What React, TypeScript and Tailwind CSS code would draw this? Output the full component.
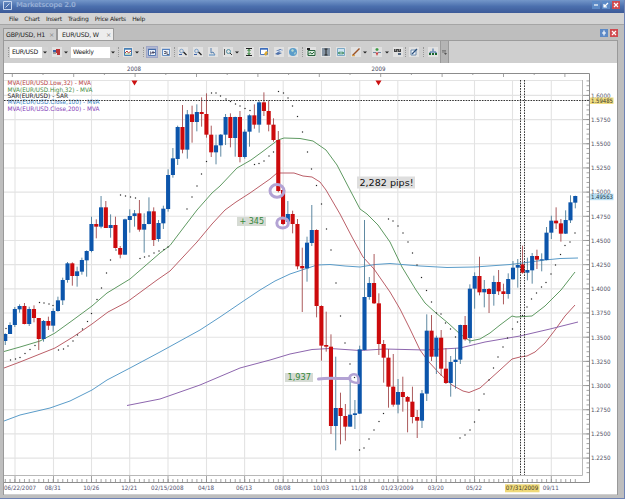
import type { ReactNode } from "react"
import clsx from "clsx"

type Row = [number, number, number, number, number] // up, high, top, bottom, low

const STEP = 4.79
const FIRST = 5.3

// rows are in thirds of a pixel, counted down from y
const blocks: { y: number; rows: Row[] }[] = [
  {
    y: 190,
    rows: [
      [1, 430, 432, 453, 465], [1, 397, 405, 432, 432], [1, 351, 357, 405, 411], [1, 343, 348, 358, 368],
      [0, 339, 348, 402, 403], [1, 350, 357, 402, 408], [0, 346, 357, 384, 397], [0, 384, 384, 447, 480],
      [1, 390, 393, 447, 455], [0, 380, 393, 407, 420], [1, 355, 363, 407, 425], [1, 320, 331, 363, 365],
      [1, 263, 270, 331, 345], [1, 216, 220, 270, 278], [0, 217, 220, 258, 287], [1, 230, 244, 258, 290],
      [1, 203, 210, 245, 254], [1, 181, 183, 211, 260], [1, 80, 102, 183, 187], [0, 88, 102, 110, 145],
      [1, 18, 52, 110, 115], [0, 33, 52, 114, 114], [1, 73, 105, 114, 143], [0, 80, 105, 174, 176],
      [0, 168, 174, 194, 205], [1, 86, 88, 194, 194], [1, 58, 78, 90, 128], [1, 60, 70, 78, 110],
      [0, 30, 70, 119, 125], [1, 70, 102, 119, 188], [1, 22, 64, 102, 103], [0, 52, 64, 150, 168],
      [1, 90, 99, 147, 155], [1, 47, 56, 100, 117],
    ],
  },
  {
    y: 60,
    rows: [
      [1, 328, 345, 447, 455], [1, 264, 295, 345, 353], [1, 197, 201, 297, 315], [0, 135, 201, 269, 280],
      [1, 150, 163, 269, 296], [0, 137, 163, 186, 248], [1, 133, 156, 186, 214], [0, 112, 156, 162, 200],
      [0, 100, 162, 224, 233], [0, 197, 224, 277, 291], [1, 224, 256, 277, 313], [1, 222, 224, 256, 290],
      [1, 162, 171, 224, 255], [0, 160, 171, 234, 262], [1, 170, 171, 234, 290], [0, 153, 171, 291, 307],
      [1, 208, 215, 291, 296], [1, 163, 166, 215, 260], [0, 133, 166, 194, 206], [1, 123, 127, 194, 218],
      [0, 97, 127, 153, 168], [0, 122, 153, 194, 214], [0, 175, 194, 240, 245], [0, 213, 240, 393, 397],
    ],
  },
  {
    y: 150,
    rows: [
      [0, 115, 120, 222, 225], [1, 153, 192, 215, 225], [0, 182, 192, 222, 250], [0, 207, 222, 349, 358],
      [0, 293, 348, 355, 486], [1, 260, 278, 355, 395], [1, 165, 240, 279, 288], [0, 238, 240, 468, 502],
    ],
  },
  {
    y: 310,
    rows: [
      [0, -14, -12, 107, 152], [0, 5, 105, 110, 125], [0, 73, 110, 348, 372], [1, 140, 294, 348, 421],
      [0, 248, 294, 318, 403], [0, 282, 318, 350, 392], [1, 210, 314, 350, 350], [1, 270, 310, 315, 357],
      [1, 107, 118, 311, 312], [1, -270, -39, 120, 121], [1, -99, -81, -39, -31], [0, -168, -81, -20, -18],
      [0, -50, -20, 102, 135], [0, 90, 102, 143, 218], [0, 117, 143, 230, 293], [0, 132, 230, 284, 290],
      [1, 207, 246, 284, 310], [0, 200, 246, 261, 305], [0, 258, 261, 275, 367], [0, 230, 275, 321, 340],
      [0, 300, 321, 332, 384], [1, 240, 250, 332, 354],
    ],
  },
  {
    y: 290,
    rows: [
      [1, 73, 122, 311, 333], [0, 75, 122, 200, 213], [1, 137, 143, 200, 252], [0, 120, 143, 236, 258],
      [0, 174, 236, 279, 282], [1, 198, 216, 279, 320], [1, 174, 209, 216, 296], [1, 104, 105, 209, 222],
      [0, 78, 105, 148, 152], [1, -17, -4, 144, 160],
    ],
  },
  {
    y: 170,
    rows: [
      [1, 307, 318, 356, 416], [0, 260, 318, 367, 376], [1, 330, 357, 367, 412], [0, 354, 357, 372, 429],
      [1, 317, 336, 372, 407], [0, 300, 336, 364, 375], [0, 341, 364, 372, 403], [1, 310, 327, 372, 386],
      [1, 273, 293, 328, 329], [1, 267, 285, 293, 353], [0, 227, 283, 308, 311], [1, 263, 300, 308, 331],
      [1, 249, 258, 301, 341], [0, 239, 258, 269, 297], [1, 250, 268, 270, 304], [1, 171, 188, 270, 271],
      [1, 137, 152, 188, 207], [0, 112, 152, 160, 177], [0, 147, 160, 191, 215], [1, 121, 150, 191, 192],
      [1, 76, 97, 151, 159], [1, 77, 78, 98, 115],
    ],
  },
]

const candles = blocks
  .flatMap((b) => b.rows.map(([up, ...v]) => ({ up: up === 1, v: v.map((n) => b.y + n / 3) })))
  .map((c, i) => ({ ...c, x: FIRST + STEP * i }))

const sar = [
  6, 328.5, 39.5, 302.5, 44, 303, 49, 304, 53, 305.5, 10.5, 360, 15.5, 359, 20, 357.5, 25, 353.5, 30, 349.5, 35, 345.5,
  58.5, 350, 63.5, 349, 68, 346, 73, 341, 77.5, 335, 82.5, 329, 87.5, 321.5, 91.5, 313.5, 97, 299.5, 101.5, 288,
  106.5, 273, 110.5, 260, 116, 250, 120.5, 195, 125.5, 196, 130.5, 197, 135.5, 198, 140, 258.5, 144.5, 257, 149, 256,
  154, 253, 159, 251, 164, 249.5, 168, 247, 187, 209, 192, 197, 197, 186, 201.5, 174, 206.5, 161.5, 211.5, 93, 216, 93,
  220.5, 96, 226, 99, 230.5, 101.5, 235.5, 104, 240, 106, 245, 108.5, 250, 110.5, 254.5, 164.5, 259, 163.5, 264, 161,
  269, 156, 273.5, 152, 278.5, 91.5, 283.5, 93, 288, 98, 292.5, 106, 297.5, 116.5, 302.5, 132, 307.5, 152, 311.5, 169,
  316.5, 185.5, 321.5, 204, 326.5, 229, 331, 250, 336, 283, 340.5, 316, 345, 343, 350, 364, 354.5, 377.5, 359.5, 450,
  364, 448, 369, 439, 374, 430, 379, 421.5, 383.5, 413.5, 388.5, 219, 393, 221, 398, 226, 403, 233, 408, 242,
  412.5, 253, 417, 265, 421.5, 277.5, 426.5, 290.5, 431.5, 302, 436.5, 313, 441, 314, 445.5, 323, 450.5, 329,
  455.5, 337, 460, 438, 465, 435, 470, 430, 474.5, 422, 479, 410, 484, 394, 489, 380, 493.5, 368, 498, 357, 503, 347,
  507.5, 338, 512.5, 329, 517.5, 322, 522.5, 315.5, 527, 307, 531.5, 299, 536.5, 293, 541.5, 287, 546, 282.5, 551, 274,
  555.5, 265, 560.5, 254.5, 565, 245.5, 570, 242, 575, 233,
]

const averages = [
  {
    color: "#5f9a62",
    points:
      "4,351.5 20,347 40,341 55,333 73,320 92,306 107,293 130,279 145,266 160,253 170,245.5 184,227 197,210 212,193 220,186 237,168 251,160 262,152 278,140 284,138 300,138.5 313,141 326,150 337,165 350,190 360,209 367,214 378,225 390,242 402,267 416,290 425,303 436,313 448,323 460,334 470,341 480,339 490,333 500,325 512,316 516,317 532,316 545,306 555,296 561,290 575,272",
  },
  {
    color: "#bb5f68",
    points:
      "4,368 20,362 40,354 55,348 73,337 92,324 108,312 127,302 157,280 170,271 197,242 212,224 225,210 236,202 250,193 270,179 277,173 294,173 303,176 312,177 320,182 326,190 340,214 352,237 363,257 374,269 390,292 400,309 410,329 420,350 428,361 440,374 452,385 463,391 469,392.5 480,388 490,379 500,370 512,359 520,357 527,356 535,352 545,343 555,330 565,316 575,305",
  },
  {
    color: "#5a9cc9",
    points:
      "4,421 20,415 50,408 70,401 92,390 107,380 130,368 160,352 200,330 220,317 245,300 260,290 275,281 290,274 305,269 317,265 330,264.5 345,266 360,267 375,264.5 390,263.5 420,266 447,267.5 475,267 510,264.5 530,262 545,260 560,258.5 578,258",
  },
  {
    color: "#8d66ae",
    points:
      "127,405.5 160,399 200,385 240,368 270,360 290,354 312,349.5 330,348.5 360,350.5 385,349 425,350 460,348 485,342 520,336 550,329 578,322",
  },
]

const legend = [
  { text: "MVA(EUR/USD.Low,32) - MVA", color: "#b5423f", w: 83.5 },
  { text: "MVA(EUR/USD.High,32) - MVA", color: "#3f8b40", w: 85 },
  { text: "SAR(EUR/USD) - SAR", color: "#222222", w: 60.5 },
  { text: "MVA(EUR/USD.Close,100) - MVA", color: "#3a83c4", w: 92 },
  { text: "MVA(EUR/USD.Close,200) - MVA", color: "#8440b8", w: 92 },
]

const dates = [
  { text: "06/22/2007", x: 20, w: 32 },
  { text: "08/31", x: 52.8, w: 16 },
  { text: "10/26", x: 91.3, w: 16 },
  { text: "12/21", x: 129.3, w: 16 },
  { text: "02/15/2008", x: 167.3, w: 32.5 },
  { text: "04/18", x: 206, w: 16 },
  { text: "06/13", x: 244, w: 16 },
  { text: "08/08", x: 282.6, w: 16 },
  { text: "10/03", x: 321, w: 16 },
  { text: "11/28", x: 359, w: 16 },
  { text: "01/23/2009", x: 397.3, w: 32.5 },
  { text: "03/20", x: 435.8, w: 16 },
  { text: "05/22", x: 474, w: 16 },
  { text: "09/11", x: 550.7, w: 16 },
]

const gridX = [15, 53.5, 91.5, 129.7, 168, 206.5, 244.6, 283.2, 321.5, 359.7, 397.8, 436.4, 474.5, 512.5, 551.3]
const prices = Array.from({ length: 16 }, (_, i) => ({ y: 95.4 + i * 24.18, label: (1.6 - i * 0.025).toFixed(4) }))
const months = Array.from({ length: 19 }, (_, i) => 12.3 + i * 30.7)

function Label({ x, y, w, fill, children, size = 6, anchor = "start" }: {
  x: number
  y: number
  w: number
  fill: string
  children: string
  size?: number
  anchor?: "start" | "middle"
}) {
  return (
    <text x={x} y={y} fontSize={size} fill={fill} textAnchor={anchor} textLength={w} lengthAdjust="spacingAndGlyphs">
      {children}
    </text>
  )
}

function Chart() {
  return (
    <svg viewBox="4 63 613 431" className="block h-[431px] w-[613px] bg-white">
      <g stroke="#e3e3e3" strokeWidth="1.1">
        {gridX.map((x) => <line key={x} x1={x} x2={x} y1="80" y2="475" />)}
        {prices.map((p) => <line key={p.y} x1="4" x2="582" y1={p.y} y2={p.y} />)}
        <path d="M4 80.5H582.5" />
      </g>
      <path d="M582.5 80V475.5H4" fill="none" stroke="#b8b8b8" />
      <path d="M4 73.5H589.5V482.5H4" fill="none" stroke="#8c8c8c" />

      <g stroke="#8c8c8c" strokeWidth="0.8">
        {months.map((x, i) => <line key={x} x1={x} x2={x} y1="73.5" y2={i % 2 ? 75 : 77} />)}
        {candles.map((c) => <line key={c.x} x1={c.x} x2={c.x} y1="479" y2="482.5" />)}
        {gridX.map((x) => <line key={x} x1={x} x2={x} y1="476" y2="482.5" />)}
        {prices.map((p) => <line key={p.y} x1="583" x2="589.5" y1={p.y} y2={p.y} />)}
        {Array.from({ length: 82 }, (_, i) => 80.9 + i * 4.836).map((y) => (
          <line key={y} x1="586.5" x2="589.5" y1={y} y2={y} />
        ))}
      </g>

      {legend.map((l, i) => (
        <Label key={l.text} x={7.5} y={85.2 + i * 6.35} w={l.w} fill={l.color} size={6.1}>{l.text}</Label>
      ))}

      {averages.map((a) => (
        <polyline key={a.color} points={a.points} fill="none" stroke={a.color} strokeWidth="1" strokeLinejoin="round" />
      ))}

      {candles.map(({ x, up, v: [high, top, bottom, low] }) => (
        <g key={x}>
          <rect x={x - 0.5} y={high} width="0.9" height={low - high} fill={up ? "#4d7c98" : "#a34a4c"} />
          <rect x={x - 2.1} y={top} width="4.1" height={Math.max(bottom - top, 1)} fill={up ? "#0c55ab" : "#cc0a0c"} />
        </g>
      ))}

      {sar.map((x, i) => i % 2 === 0 && (
        <rect key={i} x={x - 0.6} y={sar[i + 1] - 0.6} width="1.2" height="1.2" fill="#222222" />
      ))}

      <path d="M4 100.5H589" stroke="#333333" strokeDasharray="1.6 1.1" />
      <path d="M520.5 80V475M524.5 80V475" stroke="#333333" strokeDasharray="1.6 1.1" />
      <path d="M131.5 80.5h6l-3 5zM375.5 80.5h6l-3 5z" fill="#cc1111" />

      <g fill="none" stroke="#b3a3d4" strokeWidth="3" strokeLinecap="round">
        <ellipse cx="277" cy="190.8" rx="7" ry="6.4" />
        <ellipse cx="282.6" cy="223" rx="5.8" ry="5" />
        <path d="M318.5 379C330 377.5 340 379 350 378.5" />
        <path d="M352.5 374.5C357 373.5 359.5 377 358.5 383C353 383 349.5 381 349.5 378.5C349.5 376 351 374.8 352.5 374.5Z" strokeWidth="2.5" />
      </g>

      <rect x="357" y="176.5" width="58" height="12" fill="#dedede" />
      <Label x={359.5} y={186} w={54} fill="#111111" size={9.5}>2,282 pips!</Label>
      <rect x="237" y="217" width="29" height="9" fill="#d6dbd4" />
      <Label x={239.5} y={224.2} w={24.5} fill="#35883a" size={8}>+ 345</Label>
      <rect x="285" y="373" width="28" height="9" fill="#d6dbd4" />
      <Label x={287.5} y={380.4} w={23.5} fill="#35883a" size={8}>1,937</Label>

      <Label x={134} y={70.6} w={14} fill="#44445c" anchor="middle">2008</Label>
      <Label x={378.5} y={70.6} w={14} fill="#44445c" anchor="middle">2009</Label>
      {prices.map((p) => (
        <Label key={p.label} x={591} y={p.y + 2.3} w={19.5} fill="#50505f">{p.label}</Label>
      ))}
      <rect x="590" y="97.5" width="23.5" height="6.5" fill="#efdd83" />
      <Label x={591} y={103} w={22} fill="#3c3a2c">1.59485</Label>
      <rect x="590" y="193.7" width="23.5" height="6.5" fill="#b9dff2" />
      <Label x={591} y={199.3} w={22} fill="#263b4d">1.49563</Label>

      {dates.map((d) => (
        <Label key={d.text} x={d.x} y={490.3} w={d.w} fill="#505070" anchor="middle">{d.text}</Label>
      ))}
      <rect x="505" y="484.3" width="34.5" height="8" fill="#efd978" />
      <Label x={522} y={490.3} w={32.5} fill="#3f3b2c" anchor="middle">07/31/2009</Label>
    </svg>
  )
}

function Icon({ children, className, active }: { children: ReactNode; className?: string; active?: boolean }) {
  return (
    <span className={clsx("block h-[10px] w-[10px] shrink-0", active ? "bg-[#b2b9d4] outline outline-[#a0a7c6]" : "bg-[#e1e1e1]", className)}>
      <svg viewBox="0 0 10 10" className="h-[10px] w-[10px]" fill="none">{children}</svg>
    </span>
  )
}

function Arrow({ className }: { className?: string }) {
  return (
    <svg viewBox="0 0 4 3" className={clsx("h-[3px] w-[4px] shrink-0", className)}>
      <path d="M0 .5h4l-2 2z" fill="#222222" />
    </svg>
  )
}

function Grip({ className }: { className?: string }) {
  return <span className={clsx("h-[10px] w-px shrink-0 border-l border-dotted border-[#999999]", className)} />
}

function Combo({ children, className }: { children: string; className: string }) {
  return (
    <span className={clsx("flex h-[11px] shrink-0 items-center justify-between bg-white pl-[2px] text-[6.2px] tracking-[-0.3px] text-[#222222]", className)}>
      {children}
      <span className="flex h-full w-[6px] items-center justify-center bg-[#d2d2d2]"><Arrow /></span>
    </span>
  )
}

function Toolbar() {
  const lens = <><circle cx="3.5" cy="4" r="1.8" stroke="#7ba1cc" /><path d="M5.5 5l3 3" stroke="#222222" strokeWidth="1.3" /></>
  return (
    <div className="flex h-[23px] items-center border-t border-[#9c9c9c] bg-[#cfcfcf]">
      <Grip className="ml-[4px]" />
      <Combo className="ml-[1px] w-[38px]">EUR/USD</Combo>
      <Icon className="ml-[4px]">
        <path d="M1 3h4v2H1z" fill="#3b62a8" /><path d="M4 2h4v4H4zM5 6h3v2H5z" fill="#ba3436" /><path d="M1 6h3" stroke="#555555" />
      </Icon>
      <Arrow className="ml-[2px]" />
      <Combo className="ml-[3px] w-[45px]">Weekly</Combo>
      <Grip className="ml-[2px]" />
      <Icon className="ml-[4px]">
        <path d="M1.5 1.5h7v7h-7z" fill="#ffffff" stroke="#477fb5" /><path d="M1 2h8" stroke="#477fb5" strokeWidth="1.5" /><path d="M2 6l2-2 1.5 2L8 4" stroke="#b53b34" /><path d="M2 7h6" stroke="#4a9550" strokeWidth=".7" />
      </Icon>
      <Arrow className="ml-[2px]" />
      <Grip className="ml-[4px]" />
      <Icon className="ml-[3px]" active>
        <path d="M1.5 2.5h7v6h-7z" fill="#edf3fa" stroke="#547ab4" /><path d="M1 2.3h8" stroke="#3d67a8" /><path d="M3 5h1v2H3M6 4v3M5 5.5h3" stroke="#333355" strokeWidth=".8" />
      </Icon>
      <Icon className="ml-[4px]">
        <path d="M1.5 2.5h7v6h-7z" fill="#edf3fa" stroke="#6992c5" /><path d="M1 2.3h8" stroke="#4f7fc0" /><path d="M3 4.5h2v2H3M6 4.5v3h2" stroke="#444455" strokeWidth=".8" />
      </Icon>
      <Grip className="ml-[3px]" />
      <Icon className="ml-[3px]">{lens}<path d="M1 7.5h3" stroke="#3b62a8" /></Icon>
      <Icon className="ml-[5px]">{lens}<path d="M1 7.5h3" stroke="#3b62a8" /></Icon>
      <Icon className="ml-[5px]"><path d="M3 1v5l2-1 2 3" stroke="#567fae" /><path d="M1 8h6" stroke="#74a0ca" strokeWidth="1.3" /></Icon>
      <Icon className="ml-[5px]">
        <path d="M1.5 2v6" stroke="#333333" strokeWidth=".8" /><circle cx="5.5" cy="4.5" r="2" stroke="#5493a6" /><path d="M7 6l2 2" stroke="#333333" />
      </Icon>
      <Arrow className="ml-[2px]" />
      <Icon className="ml-[5px]"><path d="M2 1.5h6M2 8.5h6" stroke="#222222" /><path d="M5 2v6M3.5 4L5 2.5 6.5 4M3.5 6L5 7.5 6.5 6" stroke="#318337" /></Icon>
      <Icon className="ml-[5px]">
        <path d="M1.5 1.5h7v6h-7z" fill="#ffffff" stroke="#4b76bd" /><path d="M1 2h8" stroke="#3769ba" strokeWidth="1.4" /><path d="M5 7l2-3 2 1-2 4z" fill="#e0ac32" />
      </Icon>
      <Icon className="ml-[5px]"><path d="M2 4l4-2 3 1-4 2zM1 7l3-2 4 1-4 2z" fill="#4d70aa" /><path d="M2 5l6-2" stroke="#dce7f7" /></Icon>
      <Icon className="ml-[4px]"><circle cx="5" cy="5" r="4" fill="#5b9dca" /><path d="M3 3l2-1 1 2-2 1zM6 6l2-1-1 3z" fill="#b9d9cf" /></Icon>
      <Grip className="ml-[4px]" />
      <Icon className="ml-[3px]"><path d="M2 3.5h7v5H2z" fill="#dcecdf" stroke="#27643c" /><path d="M2 7.5l2-2 2 1.5 2-2" stroke="#27643c" /><path d="M1 1h3v2H1z" fill="#222222" /></Icon>
      <Icon className="ml-[5px]"><path d="M1 1h8v8H1z" fill="#8796a5" /><path d="M3.5 2h3M5 2v6M3.5 8h3" stroke="#222222" /></Icon>
      <Icon className="ml-[5px]"><path d="M1.5 1.5h7v7h-7z" fill="#cce4f2" stroke="#7ba8c5" /><path d="M2 6h6M4 4.5L2.5 6 4 7.5M6 4.5L7.5 6 6 7.5" stroke="#3a8756" /></Icon>
      <Icon className="ml-[5px]"><path d="M1.5 8.5L8.5 1.5" stroke="#9b5226" strokeWidth="1.4" /><path d="M1 8.7h3" stroke="#dd9b31" /></Icon>
      <Arrow className="ml-[2px]" />
      <Icon className="ml-[5px]"><path d="M5 1v3M3.5 2.5h3" stroke="#3c9b42" strokeWidth="1.3" /><path d="M1 5.5h3M6 5.5h3" stroke="#718ca5" /><path d="M3.5 5.5h3L5 9z" fill="#cc4141" /></Icon>
      <Arrow className="ml-[3px]" />
      <Icon className="ml-[4px]"><path d="M1 2h7v3H1z" fill="#444444" /><path d="M2 3h1M4 4h1M6 3h1" stroke="#ffffff" strokeWidth=".8" /><path d="M5 6h3v2H5z" fill="#54687f" /></Icon>
      <Grip className="ml-[2px]" />
      <Icon className="ml-[3px]"><path d="M2 3h5v5H2z" fill="#f5f8fc" stroke="#6d8cae" /><path d="M3 7l5-5" stroke="#294f7d" strokeWidth="1.3" /></Icon>
      <Grip className="ml-[4px]" />
      <Icon className="ml-[4px]"><path d="M5 1.5v3M2 6.5V5h6v1.5" stroke="#3467a1" /><path d="M1 6h2v2H1zM4 6h2v2H4zM7 6h2v2H7z" fill="#17652b" /></Icon>
      <span className="ml-[2px] flex h-[22px] w-[9px] shrink-0 items-center justify-center border-r border-l border-[#9a9a9a] bg-[#b4b4b4]">
        <svg viewBox="0 0 5 5" className="h-[5px] w-[5px]"><path d="M0 .7h4M0 2h4" stroke="#777777" /><path d="M2 3h3L3.5 5z" fill="#555555" /></svg>
      </span>
    </div>
  )
}

function WinButton({ red, d }: { red?: boolean; d: string }) {
  return (
    <svg viewBox="0 0 8 8" className={clsx("h-[8px] w-[8px]", red ? "bg-[#d04a50]" : "bg-[#5d8ac6]")}>
      <path d={d} stroke="#ffffff" strokeWidth="1.2" fill="none" />
    </svg>
  )
}

export default function App() {
  return (
    <div className="flex h-[499px] w-[625px] flex-col overflow-hidden border-r border-b border-[#6f83b5] bg-[#bebebe] font-['DejaVu_Sans',sans-serif]">
      <header className="flex h-[13px] shrink-0 items-center justify-between bg-linear-to-b from-[#7497c9] via-[#4b6fad] to-[#3c5a98] pr-[4px] pl-[3px]">
        <div className="flex items-center gap-[4px] pb-[3px]">
          <svg viewBox="0 0 9 9" className="h-[9px] w-[9px]" fill="none" stroke="#c8d7ef"><path d="M.5 .5h8v8h-8zM2.5 6.5l4-4" /></svg>
          <span className="text-[7px] leading-[9px] font-bold tracking-[-0.4px] text-[#91abd4]">Marketscope 2.0</span>
        </div>
        <div className="flex gap-[2px] pb-[4px]">
          <WinButton d="M2 4h4" />
          <WinButton d="M6 2L2 6M2 3v3h3" />
          <WinButton red d="M2 2l4 4M6 2L2 6" />
        </div>
      </header>
      <nav className="flex h-[12px] shrink-0 items-center gap-[6.2px] border-b border-[#a5a5a5] bg-[#d3d3d3] pl-[9px] text-[6px] tracking-[-0.22px] text-[#222222]">
        <span>File</span>
        <span>Chart</span>
        <span>Insert</span>
        <span>Trading</span>
        <span>Price Alerts</span>
        <span>Help</span>
      </nav>
      <div className="flex h-[15px] shrink-0 items-end justify-between pr-[6px] pl-[3px] text-[6.3px] tracking-[-0.2px] text-[#222222]">
        <div className="flex">
          <span className="flex h-[12px] w-[54px] items-center justify-between rounded-t-[1px] border border-b-0 border-[#999999] bg-[#cdcdcd] px-[2px]">GBP/USD, H1 <i className="text-[#888888] not-italic">×</i></span>
          <span className="flex h-[12px] w-[57px] items-center justify-between rounded-t-[1px] border border-b-0 border-[#999999] bg-[#ededed] pr-[2px] pl-[4px]">EUR/USD, W <i className="text-[#888888] not-italic">×</i></span>
        </div>
        <div className="flex gap-[2px] pb-[3px]">
          <WinButton d="M4 1.5v5M2 4h4" />
          <WinButton red d="M2 2l4 4M6 2L2 6" />
        </div>
      </div>
      <div className="mr-[6px] ml-[3px] h-[455px] w-[615px] border-r border-l border-[#999999] bg-[#cfcfcf]">
        <Toolbar />
        <Chart />
      </div>
    </div>
  )
}
